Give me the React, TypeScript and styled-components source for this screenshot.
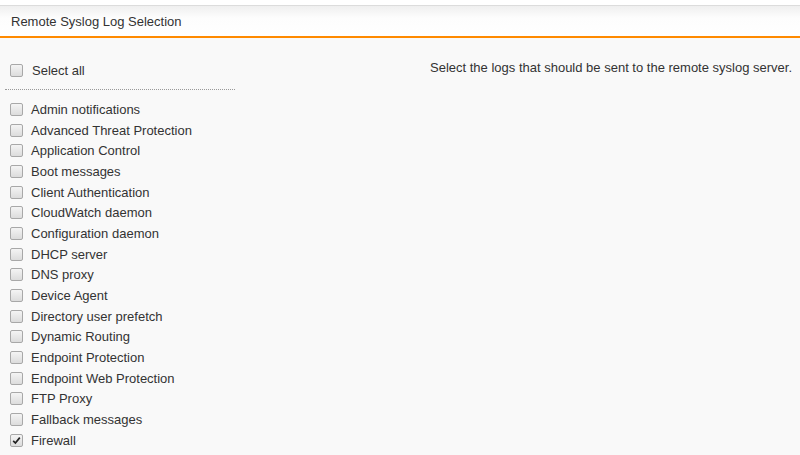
import React from "react";
import styled, { createGlobalStyle } from "styled-components";

const Global = createGlobalStyle`
  html, body { margin: 0; padding: 0; background: #f9f9f9; }
  body { font-family: "Liberation Sans", Arial, sans-serif; color: #222; }
`;

const Page = styled.div`
  width: 800px;
  height: 455px;
  overflow: hidden;
  background: #f9f9f9;
`;

const TopGap = styled.div`
  height: 5px;
  background: #fff;
  border-bottom: 1px solid #dcdcdc;
`;

const Header = styled.div`
  height: 30px;
  display: flex;
  align-items: center;
  padding-left: 11px;
  font-size: 13px;
  color: #333;
  background: linear-gradient(#efefef, #fdfdfd 40%, #ffffff);
  border-bottom: 2px solid #ff8a00;
`;

const Body = styled.div`
  display: flex;
  padding-top: 22px;
`;

const LeftCol = styled.div`
  width: 225px;
  padding-left: 10px;
  flex-shrink: 0;
`;

const SelectAllRow = styled.label`
  display: flex;
  align-items: center;
  height: 20px;
  font-size: 13px;
  color: #333;
  padding-bottom: 9px;
  border-bottom: 1px dotted #999;
  margin-left: -5px;
  padding-left: 5px;
  margin-bottom: 9px;
`;

const Row = styled.label`
  display: flex;
  align-items: center;
  height: 20.69px;
  font-size: 13px;
  color: #333;
`;

const Box = styled.span<{ $gap?: number }>`
  width: 11px;
  height: 11px;
  border: 1px solid #a8a8a8;
  border-radius: 2px;
  background: linear-gradient(#f4f4f4, #dcdcdc);
  margin-right: ${(p) => p.$gap ?? 8}px;
  display: inline-flex;
  align-items: center;
  justify-content: center;
  flex-shrink: 0;
`;

const RightCol = styled.div`
  flex: 1;
  padding-left: 195px;
  font-size: 13px;
  color: #333;
  white-space: nowrap;
`;

const Check = () => (
  <svg width="9" height="9" viewBox="0 0 9 9">
    <path d="M1.2 4.8 L3.4 7 L7.8 1.6" fill="none" stroke="#222" strokeWidth="1.7" />
  </svg>
);

const items: [string, boolean][] = [
  ["Admin notifications", false],
  ["Advanced Threat Protection", false],
  ["Application Control", false],
  ["Boot messages", false],
  ["Client Authentication", false],
  ["CloudWatch daemon", false],
  ["Configuration daemon", false],
  ["DHCP server", false],
  ["DNS proxy", false],
  ["Device Agent", false],
  ["Directory user prefetch", false],
  ["Dynamic Routing", false],
  ["Endpoint Protection", false],
  ["Endpoint Web Protection", false],
  ["FTP Proxy", false],
  ["Fallback messages", false],
  ["Firewall", true],
];

export default function App() {
  return (
    <Page>
      <Global />
      <TopGap />
      <Header>Remote Syslog Log Selection</Header>
      <Body>
        <LeftCol>
          <SelectAllRow>
            <Box $gap={9} />
            Select all
          </SelectAllRow>
          {items.map(([name, checked]) => (
            <Row key={name}>
              <Box>{checked && <Check />}</Box>
              {name}
            </Row>
          ))}
        </LeftCol>
        <RightCol>Select the logs that should be sent to the remote syslog server.</RightCol>
      </Body>
    </Page>
  );
}
